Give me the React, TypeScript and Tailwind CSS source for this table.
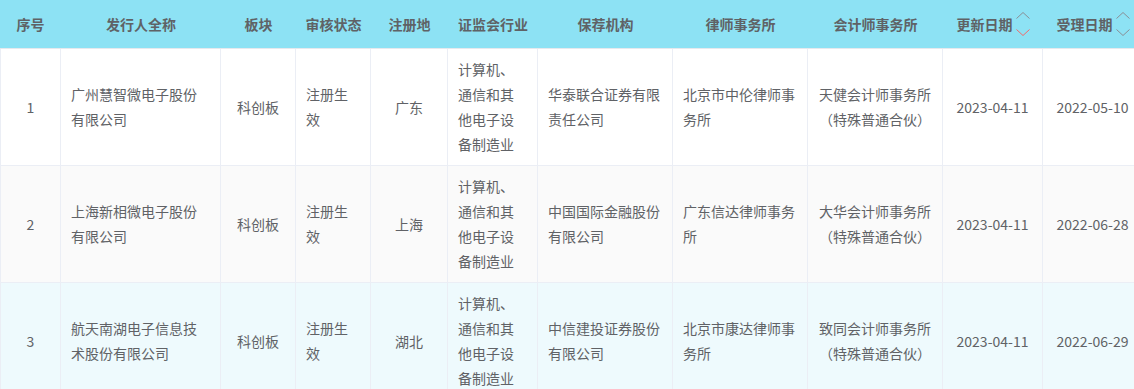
import React from "react";

const font = { fontFamily: '"Noto Sans CJK SC", "Noto Sans", sans-serif' };

type Row = {
  no: string;
  name: string;
  board: string;
  status: string;
  place: string;
  industry: string;
  sponsor: string;
  law: string;
  account: string;
  updated: string;
  accepted: string;
  bg: string;
};

const rows: Row[] = [
  {
    no: "1",
    name: "广州慧智微电子股份有限公司",
    board: "科创板",
    status: "注册生效",
    place: "广东",
    industry: "计算机、通信和其他电子设备制造业",
    sponsor: "华泰联合证券有限责任公司",
    law: "北京市中伦律师事务所",
    account: "天健会计师事务所（特殊普通合伙）",
    updated: "2023-04-11",
    accepted: "2022-05-10",
    bg: "bg-white",
  },
  {
    no: "2",
    name: "上海新相微电子股份有限公司",
    board: "科创板",
    status: "注册生效",
    place: "上海",
    industry: "计算机、通信和其他电子设备制造业",
    sponsor: "中国国际金融股份有限公司",
    law: "广东信达律师事务所",
    account: "大华会计师事务所（特殊普通合伙）",
    updated: "2023-04-11",
    accepted: "2022-06-28",
    bg: "bg-[#fafafa]",
  },
  {
    no: "3",
    name: "航天南湖电子信息技术股份有限公司",
    board: "科创板",
    status: "注册生效",
    place: "湖北",
    industry: "计算机、通信和其他电子设备制造业",
    sponsor: "中信建投证券股份有限公司",
    law: "北京市康达律师事务所",
    account: "致同会计师事务所（特殊普通合伙）",
    updated: "2023-04-11",
    accepted: "2022-06-29",
    bg: "bg-[#eefafd]",
  },
];

const cols = "grid grid-cols-[61px_160px_75px_75px_77px_90px_135px_135px_135px_100px_100px]";

function SortIcon({ active }: { active?: boolean }) {
  return (
    <svg width="14" height="26" viewBox="0 0 14 26" className="ml-[3px] shrink-0">
      <polyline points="0.5,7.5 7,1.5 13.5,7.5" fill="none" stroke="#8a8f96" strokeWidth="1" />
      <polyline
        points="0.5,18.5 7,24.5 13.5,18.5"
        fill="none"
        stroke={active ? "#f36a6a" : "#8a8f96"}
        strokeWidth="1"
      />
    </svg>
  );
}

function H({ children, sort, active }: { children: React.ReactNode; sort?: boolean; active?: boolean }) {
  return (
    <div className="h-[48px] flex items-center justify-center text-[14px] font-bold text-[#5f6266]">
      <span>{children}</span>
      {sort && <SortIcon active={active} />}
    </div>
  );
}

function C({ children, center, first }: { children: React.ReactNode; center?: boolean; first?: boolean }) {
  return (
    <div
      className={`flex items-center border-r border-[#ebeef5] px-[10px] py-[8px] ${
        first ? "border-l" : ""
      } ${center ? "justify-center text-center" : "justify-start text-left"}`}
    >
      <div className="w-full break-all">{children}</div>
    </div>
  );
}

export default function App() {
  return (
    <div className="w-[1134px] h-[389px] overflow-hidden bg-white" style={font}>
      <div className="w-[1183px]">
        <div className={`${cols} bg-[#8de2f4] border-b border-[#e6e9ee]`}>
          <H>序号</H>
          <H>发行人全称</H>
          <H>板块</H>
          <H>审核状态</H>
          <H>注册地</H>
          <H>证监会行业</H>
          <H>保荐机构</H>
          <H>律师事务所</H>
          <H>会计师事务所</H>
          <H sort active>
            更新日期
          </H>
          <H sort>受理日期</H>
        </div>
        {rows.map((r) => (
          <div
            key={r.no}
            className={`${cols} ${r.bg} border-b border-[#ebeef5] text-[14px] leading-[25px] text-[#606266] h-[117px]`}
          >
            <C center first>
              {r.no}
            </C>
            <C>{r.name}</C>
            <C center>{r.board}</C>
            <C>{r.status}</C>
            <C center>{r.place}</C>
            <C>{r.industry}</C>
            <C>{r.sponsor}</C>
            <C>{r.law}</C>
            <C center>{r.account}</C>
            <C center>{r.updated}</C>
            <C center>{r.accepted}</C>
          </div>
        ))}
      </div>
    </div>
  );
}
